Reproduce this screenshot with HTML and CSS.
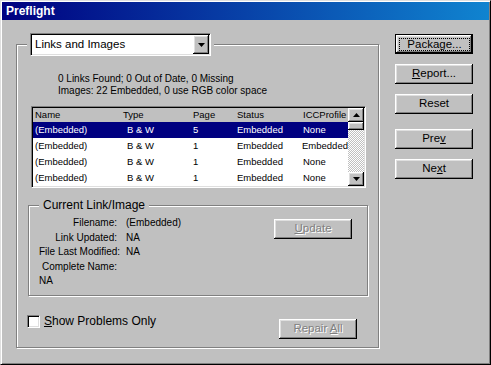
FILE: index.html
```html
<!DOCTYPE html>
<html lang="en">

<head>
  <title>Preflight</title>
  <meta charset="utf-8">
  <link rel="stylesheet" href="styles.css">
</head>

<body>
  <div class="window">
    <div class="titlebar">Preflight</div>
    <div class="dialog">
      <fieldset class="group main">
        <legend class="main-legend">
          <div class="select">
            <span class="select-text">Links and Images</span>
            <span class="select-btn">
              <svg width="7" height="4" viewBox="0 0 7 4"><path d="M0 0h7L3.5 4z" fill="#000"/></svg>
            </span>
          </div>
        </legend>

        <div class="summary">
          <div>0 Links Found; 0 Out of Date, 0 Missing</div>
          <div>Images: 22 Embedded, 0 use RGB color space</div>
        </div>

        <div class="list">
          <div class="list-body">
            <div class="list-row list-head">
              <span>Name</span><span>Type</span><span>Page</span><span>Status</span><span>ICCProfile</span>
            </div>
            <div class="list-row selected">
              <span>(Embedded)</span><span class="type">B &amp; W</span><span>5</span><span>Embedded</span><span>None</span>
            </div>
            <div class="list-row">
              <span>(Embedded)</span><span class="type">B &amp; W</span><span>1</span><span>Embedded</span><span class="icc">Embedded</span>
            </div>
            <div class="list-row">
              <span>(Embedded)</span><span class="type">B &amp; W</span><span>1</span><span>Embedded</span><span>None</span>
            </div>
            <div class="list-row">
              <span>(Embedded)</span><span class="type">B &amp; W</span><span>1</span><span>Embedded</span><span>None</span>
            </div>
          </div>
          <div class="scrollbar">
            <div class="sb-btn">
              <svg width="7" height="4" viewBox="0 0 7 4"><path d="M0 4h7L3.5 0z" fill="#000"/></svg>
            </div>
            <div class="sb-thumb"></div>
            <div class="sb-track"></div>
            <div class="sb-btn">
              <svg width="7" height="4" viewBox="0 0 7 4"><path d="M0 0h7L3.5 4z" fill="#000"/></svg>
            </div>
          </div>
        </div>

        <fieldset class="group current">
          <legend>Current Link/Image</legend>
          <div class="current-body">
            <dl class="fields">
              <dt>Filename:</dt><dd>(Embedded)</dd>
              <dt>Link Updated:</dt><dd>NA</dd>
              <dt>File Last Modified:</dt><dd>NA</dd>
              <dt>Complete Name:</dt><dd></dd>
              <dd class="full">NA</dd>
            </dl>
            <button class="btn update" disabled><span><u>U</u>pdate</span></button>
          </div>
        </fieldset>

        <div class="footer">
          <label class="check">
            <span class="check-box"></span>
            <span><u>S</u>how Problems Only</span>
          </label>
          <button class="btn repair" disabled><span>Repair <u>A</u>ll</span></button>
        </div>
      </fieldset>

      <div class="actions">
        <button class="btn btn-default"><span class="focus">Package...</span></button>
        <button class="btn"><span><u>R</u>eport...</span></button>
        <button class="btn"><span>Reset</span></button>
        <button class="btn prev"><span>Pre<u>v</u></span></button>
        <button class="btn"><span>Ne<u>x</u>t</span></button>
      </div>
    </div>
  </div>
</body>

</html>
```

FILE: styles.css
```css
html,
body {
  padding: 0;
  margin: 0;
}

body {
  background: #c0c0c0;
  color: #000;
  font: 10px/1.2 "Liberation Sans", Arial, sans-serif;
}

button {
  font: inherit;
}

.window {
  box-sizing: border-box;
  width: 491px;
  height: 365px;
  padding: 1px;
  border: 1px solid;
  border-color: #dfdfdf #000 #000 #dfdfdf;
  box-shadow: inset 1px 1px #fff, inset -1px -1px #808080;
}

.titlebar {
  height: 18px;
  padding-left: 4px;
  background: linear-gradient(to right, #000080, #1084d0);
  color: #fff;
  font-weight: bold;
  font-size: 12px;
  line-height: 18px;
}

.dialog {
  display: flex;
  align-items: flex-start;
  padding: 13px 0 0 14px;
}

/* etched group frame */
.group {
  box-sizing: border-box;
  min-width: 0;
  margin: 0;
  border: 1px solid #808080;
  box-shadow: inset 1px 1px #fff, 1px 1px #fff;
}

.group legend {
  background: #c0c0c0;
}

.main {
  width: 363px;
  padding: 0 12px 8px 10px;
}

.main-legend {
  padding: 0 3px;
}

.select {
  display: flex;
  box-sizing: border-box;
  width: 181px;
  height: 23px;
  padding: 1px;
  border: 1px solid;
  border-color: #808080 #fff #fff #808080;
  box-shadow: inset 1px 1px #000, inset -1px -1px #dfdfdf;
  background: #fff;
  font-size: 11.5px;
}

.select-text {
  flex: 1;
  display: flex;
  align-items: center;
  padding-left: 3px;
}

.select-btn,
.sb-btn,
.sb-thumb,
.btn {
  background: #c0c0c0;
  box-shadow: inset -1px -1px #000, inset 1px 1px #fff, inset -2px -2px #808080, inset 2px 2px #dfdfdf;
}

.select-btn {
  width: 16px;
  display: flex;
  align-items: center;
  justify-content: center;
}

.summary {
  margin: 17px 0 0 31px;
  line-height: 12px;
}

.list {
  display: flex;
  box-sizing: border-box;
  height: 82px;
  margin: 9px 0 0 4px;
  padding: 1px;
  border: 1px solid;
  border-color: #808080 #fff #fff #808080;
  box-shadow: inset 1px 1px #000, inset -1px -1px #dfdfdf;
  background: #fff;
  font-size: 9.5px;
}

.list-body {
  flex: 1;
  overflow: hidden;
}

.list-row {
  display: grid;
  grid-template-columns: 88px 70px 44px 66px 47px;
  height: 16px;
  line-height: 16px;
}

.list-row span {
  padding-left: 2px;
  white-space: nowrap;
}

.list-row .type {
  padding-left: 6px;
}

.list-row .icc {
  padding-left: 1px;
}

.list-head {
  height: 14px;
  line-height: 14px;
  background: #c0c0c0;
}

.selected {
  background: #000080;
  color: #fff;
}

.scrollbar {
  width: 16px;
  display: flex;
  flex-direction: column;
}

.sb-btn {
  height: 14px;
  display: flex;
  align-items: center;
  justify-content: center;
}

.sb-thumb {
  height: 8px;
}

.sb-track {
  flex: 1;
  background: repeating-conic-gradient(#c0c0c0 0 25%, #fff 0 50%) 0 0 / 2px 2px;
}

.current {
  margin: 10px -2px 0 1px;
  padding: 4px 15px 6px 10px;
}

.current legend {
  padding: 0 4px;
  font-size: 12px;
  line-height: 14px;
}

.current-body {
  display: flex;
  align-items: flex-start;
}

.fields {
  flex: 1;
  display: grid;
  grid-template-columns: 78px auto;
  column-gap: 9px;
  margin: 0;
  line-height: 14.5px;
}

.fields dt {
  text-align: right;
  white-space: nowrap;
}

.fields dd {
  margin: 0;
}

.fields .full {
  grid-column: 1 / -1;
}

.update {
  margin-top: 3px;
}

.footer {
  display: flex;
  align-items: flex-start;
  margin-top: 19px;
}

.check {
  display: flex;
  align-items: center;
  gap: 4px;
  font-size: 12px;
  line-height: 13px;
}

.check-box {
  box-sizing: border-box;
  width: 13px;
  height: 13px;
  border: 1px solid;
  border-color: #808080 #fff #fff #808080;
  box-shadow: inset 1px 1px #000, inset -1px -1px #dfdfdf;
  background: #fff;
}

.repair {
  margin: 4px 9px 0 auto;
}

.btn {
  box-sizing: border-box;
  width: 78px;
  height: 20px;
  padding: 0;
  border: none;
  color: #000;
  font-size: 11.5px;
  display: flex;
  align-items: center;
  justify-content: center;
}

.btn:disabled {
  color: #808080;
  text-shadow: 1px 1px 0 #fff;
}

.btn-default {
  border: 1px solid #000;
  padding: 3px 2px 2px 3px;
}

.focus {
  flex: 1;
  align-self: stretch;
  display: flex;
  align-items: center;
  justify-content: center;
  border: 1px dotted #000;
}

.actions {
  display: flex;
  flex-direction: column;
  gap: 10px;
  margin: 1px 0 0 16px;
}

.actions .prev {
  margin-top: 5px;
}
```
